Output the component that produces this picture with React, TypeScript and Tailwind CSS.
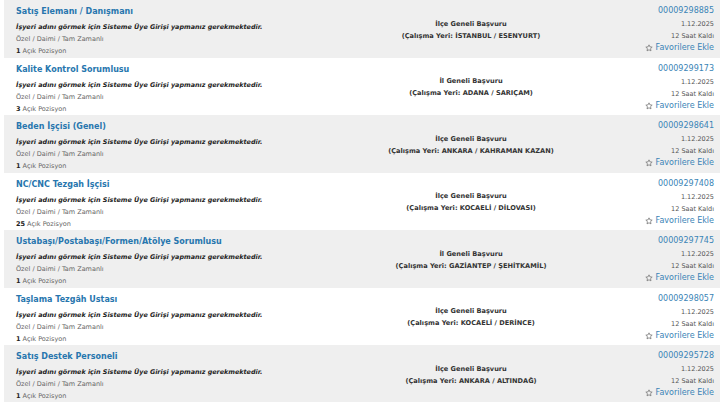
import React from 'react';

interface Job {
  title: string;
  count: number;
  scope: string;
  place: string;
  code: string;
}

const JOBS: Job[] = [
  { title: 'Satış Elemanı / Danışmanı', count: 1, scope: 'İlçe Geneli Başvuru', place: 'İSTANBUL / ESENYURT', code: '00009298885' },
  { title: 'Kalite Kontrol Sorumlusu', count: 3, scope: 'İl Geneli Başvuru', place: 'ADANA / SARIÇAM', code: '00009299173' },
  { title: 'Beden İşçisi (Genel)', count: 1, scope: 'İlçe Geneli Başvuru', place: 'ANKARA / KAHRAMAN KAZAN', code: '00009298641' },
  { title: 'NC/CNC Tezgah İşçisi', count: 25, scope: 'İlçe Geneli Başvuru', place: 'KOCAELİ / DİLOVASI', code: '00009297408' },
  { title: 'Ustabaşı/Postabaşı/Formen/Atölye Sorumlusu', count: 1, scope: 'İl Geneli Başvuru', place: 'GAZİANTEP / ŞEHİTKAMİL', code: '00009297745' },
  { title: 'Taşlama Tezgâh Ustası', count: 1, scope: 'İlçe Geneli Başvuru', place: 'KOCAELİ / DERİNCE', code: '00009298057' },
  { title: 'Satış Destek Personeli', count: 1, scope: 'İlçe Geneli Başvuru', place: 'ANKARA / ALTINDAĞ', code: '00009295728' },
];

const StarOutline = () => (
  <svg width="8" height="8" viewBox="0 0 24 24" fill="none" stroke="#777" strokeWidth="2.4" strokeLinejoin="round">
    <path d="M12 2.5l2.9 6.1 6.6.8-4.9 4.6 1.3 6.6L12 17.3l-5.9 3.3 1.3-6.6-4.9-4.6 6.6-.8z" />
  </svg>
);

const JobRow: React.FC<{ job: Job; shaded: boolean }> = ({ job, shaded }) => (
  <div className={`flex h-[57.5px] ${shaded ? 'bg-[#efefef]' : 'bg-white'}`}>
    {/* left: title and company info */}
    <div className="w-[334px] shrink-0 pl-[12px] pt-[5px]">
      <div className="text-[8px] font-bold leading-[14px] text-[#2776ae]">{job.title}</div>
      <div className="mt-[2px] text-[6.4px] font-bold italic leading-[12px] text-[#222]">
        İşyeri adını görmek için Sisteme Üye Girişi yapmanız gerekmektedir.
      </div>
      <div className="text-[6.5px] leading-[12px] text-[#666]">Özel / Daimi / Tam Zamanlı</div>
      <div className="text-[6.5px] leading-[13px] text-[#666]">
        <span className="font-bold text-[#222]">{job.count}</span> Açık Pozisyon
      </div>
    </div>

    {/* middle: application scope */}
    <div className="flex flex-1 flex-col items-center justify-center pt-[2px] text-[6.6px] font-bold leading-[12px] text-[#333]">
      <div>{job.scope}</div>
      <div>(Çalışma Yeri: {job.place})</div>
    </div>

    {/* right: code, date, favourites */}
    <div className="flex w-[116px] shrink-0 flex-col items-end pr-[6px] pt-[4px]">
      <div className="text-[8px] leading-[14px] text-[#3a84b6]">{job.code}</div>
      <div className="text-[6.5px] leading-[12px] text-[#555]">1.12.2025</div>
      <div className="text-[6.5px] leading-[12px] text-[#555]">12 Saat Kaldı</div>
      <div className="flex items-center gap-[3px] text-[8px] leading-[12px] text-[#3a84b6]">
        <StarOutline />
        Favorilere Ekle
      </div>
    </div>
  </div>
);

export default function App() {
  return (
    <div className="h-[402px] w-[720px] overflow-hidden bg-white pl-[4px]" style={{ fontFamily: '"DejaVu Sans", Verdana, sans-serif' }}>
      {JOBS.map((job, i) => (
        <JobRow key={job.code} job={job} shaded={i % 2 === 0} />
      ))}
    </div>
  );
}
